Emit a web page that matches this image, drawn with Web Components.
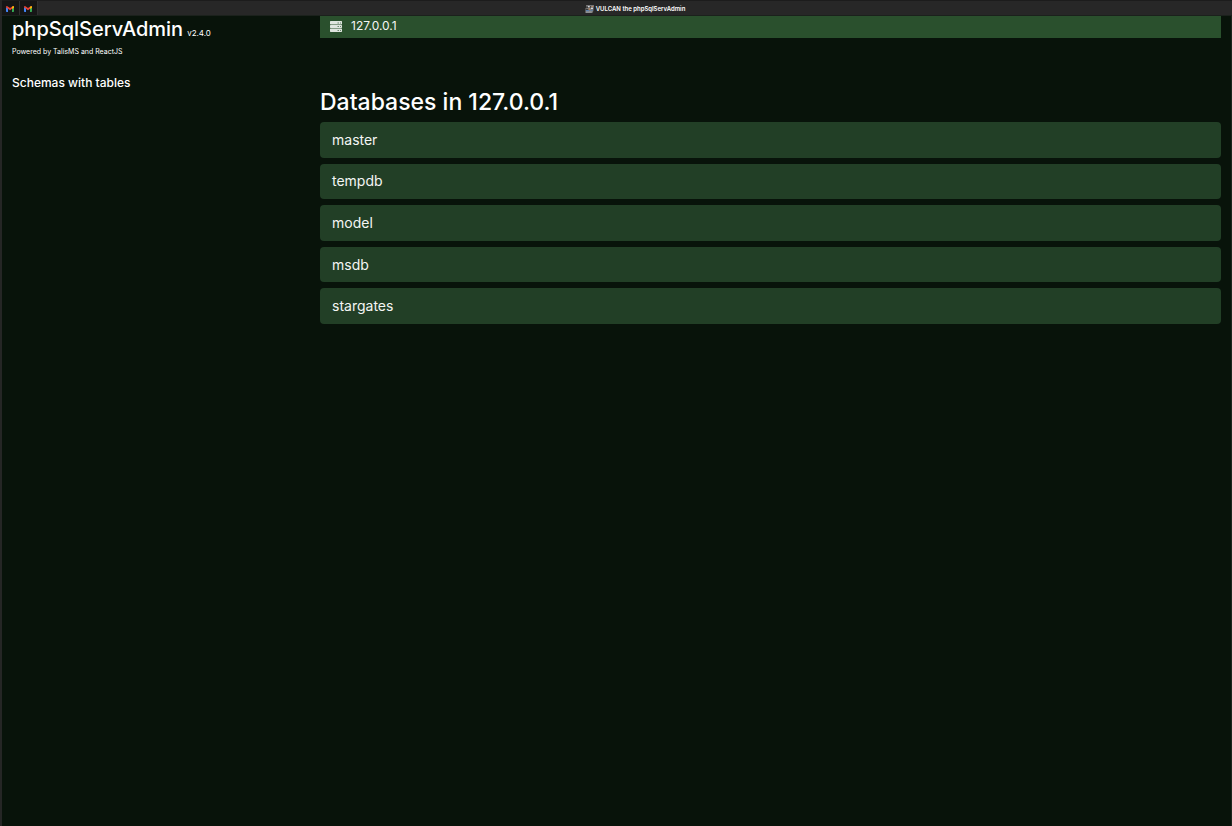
<!DOCTYPE html>
<html lang="en">
<head>
<meta charset="utf-8">
<title>VULCAN the phpSqlServAdmin</title>
<style>
html, body { margin: 0; height: 100%; }
body { background: #08130a; color: #fff; font-family: Inter, "Liberation Sans", sans-serif; }
</style>
</head>
<body>
<admin-app></admin-app>
<script>
function define(name, html) {
  const template = document.createElement('template');
  template.innerHTML = html;
  customElements.define(name, class extends HTMLElement {
    constructor() {
      super();
      this.attachShadow({ mode: 'open' }).append(template.content.cloneNode(true));
    }
  });
}

define('mail-tab', `
<style>
:host { display: block; background: #161616; border-right: 1px solid #303030; width: 17px; }
button { all: unset; display: flex; align-items: center; justify-content: center; width: 100%; height: 100%; padding: 2px 1px 0 0; box-sizing: border-box; }
</style>
<button aria-label="Mail">
<svg width="8" height="6" viewBox="0 0 24 18"><path fill="#4285f4" d="M0 3v13q0 2 2 2h4V7z"/><path fill="#34a853" d="M18 7v11h4q2 0 2-2V3z"/><path fill="#ea4335" d="M0 3q0-3 3-3l9 6 9-6q3 0 3 3v1l-12 9L0 4z"/><path fill="#fbbc04" d="M18 3l3-3q3 0 3 3v2l-6 4z"/></svg>
</button>`);

define('window-bar', `
<style>
:host { display: grid; grid-template-columns: auto 1fr; height: 16px; box-sizing: border-box; background: #272727; border-top: 1px solid #1c1c1c; border-bottom: 1px solid #1b211c; }
.tabs { display: flex; }
.title { display: flex; align-items: center; justify-content: center; gap: 2px; font-size: 6px; line-height: 8px; font-weight: 600; padding-top: 2px; }
</style>
<div class="tabs"><mail-tab></mail-tab><mail-tab></mail-tab></div>
<div class="title">
<svg width="9" height="8" viewBox="0 0 27 24"><path fill="#777" d="M3 0h24l-2 18-3 6H1V10h4z"/><path fill="#272727" d="M5 5h5v3H5zm-3 7h8v2H2zm12-9h3v5h-3z"/><path fill="#d4d8df" d="M9 3h5v4H9zm9 5h6v4h-6zM3 20h17v2H3z"/><path fill="#5c80ad" d="M3 15h9v4H3zm13-1h7v3h-7z"/><path fill="#c08a62" d="M11 10h5v4h-5zm9-7h5v3h-5z"/></svg>
<span>VULCAN the phpSqlServAdmin</span>
</div>`);

define('app-sidebar', `
<style>
:host { display: block; padding: 0 10px; }
h1 { display: flex; align-items: baseline; gap: 4px; margin: 0; font-size: 20px; line-height: 26px; font-weight: 500; }
small { font-size: 8px; line-height: 12px; font-weight: 400; }
p { margin: 5px 0 16px; font-size: 7px; line-height: 10px; }
h2 { margin: 0; font-size: 12px; line-height: 20px; font-weight: 500; }
</style>
<h1>phpSqlServAdmin <small>v2.4.0</small></h1>
<p>Powered by TalisMS and ReactJS</p>
<h2>Schemas with tables</h2>`);

define('host-bar', `
<style>
:host { display: flex; align-items: center; gap: 9px; height: 22px; box-sizing: border-box; padding: 0 10px 2px; background: #2a502d; font-size: 12px; line-height: 16px; }
a { color: #f4f6f4; text-decoration: none; }
svg { display: block; }
</style>
<svg width="12" height="11" viewBox="0 0 24 22"><path fill="#dfe5df" d="M1 0h22l1 1v5l-1 1H1L0 6V1zM1 8h22l1 1v4l-1 1H1l-1-1V9zM1 15h22l1 1v5l-1 1H1l-1-1v-5z"/><path fill="#6d8870" d="M15 3h3v2h-3zm5 0h2v2h-2zm-5 7h3v2h-3zm5 0h2v2h-2zm-5 8h3v2h-3zm5 0h2v2h-2z"/></svg>
<a href="#"><slot></slot></a>`);

define('database-row', `
<style>
:host { display: grid; }
a { display: flex; align-items: center; padding: 0 12px; border-radius: 4px; background: #223f26; color: #f4f6f4; text-decoration: none; font-size: 14px; line-height: 20px; }
</style>
<a href="#"><slot></slot></a>`);

define('database-list', `
<style>
:host { display: block; padding-top: 48px; }
h2 { margin: 0 0 4px; font-size: 23px; line-height: 32px; font-weight: 500; }
.rows { display: grid; grid-auto-rows: 1fr; gap: 6px; min-height: 202px; }
</style>
<h2>Databases in 127.0.0.1</h2>
<div class="rows"><slot></slot></div>`);

define('admin-app', `
<style>
:host { display: flex; flex-direction: column; min-height: 100vh; box-sizing: border-box; border-left: 2px solid #252625; }
.body { flex: 1; display: grid; grid-template-columns: 318px 1fr; border-right: 1px solid #1d251e; }
main { padding-right: 10px; }
</style>
<window-bar></window-bar>
<div class="body">
<app-sidebar></app-sidebar>
<main>
<host-bar>127.0.0.1</host-bar>
<database-list>
<database-row>master</database-row>
<database-row>tempdb</database-row>
<database-row>model</database-row>
<database-row>msdb</database-row>
<database-row>stargates</database-row>
</database-list>
</main>
</div>`);
</script>
</body>
</html>
